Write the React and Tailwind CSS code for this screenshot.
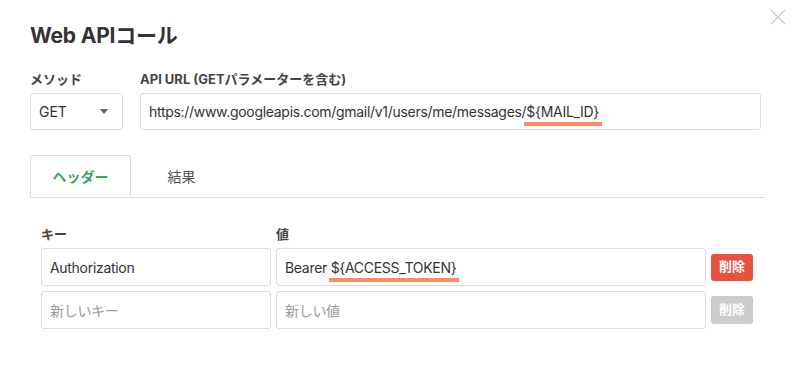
function Marked({ children }) {
  return (
    <span className="relative">
      {children}
      <span className="absolute left-[-2px] right-[-3px] bottom-[-6px] h-[4px] bg-[#ff8a65]" />
    </span>
  );
}

function TextBox({ className = '', children, placeholder }) {
  return (
    <div
      className={`h-[38px] flex items-center px-[8px] border border-[#dcdcdc] rounded-[3px] text-[14px] tracking-[-0.3px] ${
        placeholder ? 'text-[#9a9a9a]' : 'text-[#333]'
      } ${className}`}
    >
      {children}
    </div>
  );
}

export default function App() {
  return (
    <div
      className="relative w-[793px] h-[368px] bg-white text-[#333] pl-[30px] pt-[22px]"
      style={{ fontFamily: 'Inter, "Noto Sans CJK JP", sans-serif' }}
    >
      {/* close */}
      <svg className="absolute left-[770px] top-[9px]" width="16" height="16" viewBox="0 0 16 16">
        <path d="M1 1L15 15M15 1L1 15" stroke="#c8c8c8" strokeWidth="1.3" fill="none" />
      </svg>

      <h1 className="text-[21px] font-bold leading-[28px] tracking-[-0.2px]">Web APIコール</h1>

      <div className="flex gap-[17px] mt-[20px]">
        <div className="w-[93px]">
          <div className="text-[13px] font-bold leading-[18px] mb-[5px] text-[#444]">メソッド</div>
          <div className="h-[37px] flex items-center justify-between pl-[8px] pr-[14px] border border-[#dcdcdc] rounded-[3px] text-[14px]">
            <span>GET</span>
            <svg width="8" height="5" viewBox="0 0 8 5">
              <path d="M0 0H8L4 5Z" fill="#666" />
            </svg>
          </div>
        </div>
        <div className="w-[621px]">
          <div className="text-[13px] font-bold leading-[18px] mb-[5px] text-[#444]">
            API URL (GETパラメーターを含む)
          </div>
          <div className="h-[37px] flex items-center px-[8px] border border-[#dcdcdc] rounded-[3px] text-[14px] tracking-[-0.3px]">
            <span>
              https://www.googleapis.com/gmail/v1/users/me/messages/<Marked>{'${MAIL_ID}'}</Marked>
            </span>
          </div>
        </div>
      </div>

      {/* tabs */}
      <div className="flex mt-[25px] border-b border-[#dcdcdc] w-[735px]">
        <div className="w-[101px] h-[42px] mb-[-1px] flex items-center justify-center border border-[#dcdcdc] border-b-white rounded-t-[3px] bg-white text-[14px] font-bold text-[#37a556]">
          ヘッダー
        </div>
        <div className="w-[101px] h-[42px] flex items-center justify-center text-[14px] text-[#555]">
          結果
        </div>
      </div>

      {/* headers table */}
      <div className="ml-[11px] mt-[27px] w-[712px]">
        <div className="flex gap-[5px] text-[13px] font-bold leading-[18px] text-[#444] mb-[5px]">
          <div className="w-[230px]">キー</div>
          <div>値</div>
        </div>
        <div className="flex flex-col gap-[5px]">
          <div className="flex items-center gap-[5px]">
            <TextBox className="w-[230px]">Authorization</TextBox>
            <TextBox className="w-[430px]">
              <span>
                Bearer <Marked>{'${ACCESS_TOKEN}'}</Marked>
              </span>
            </TextBox>
            <button className="w-[42px] h-[27px] rounded-[3px] bg-[#e5533f] text-white text-[13px] font-bold">
              削除
            </button>
          </div>
          <div className="flex items-center gap-[5px]">
            <TextBox className="w-[230px]" placeholder>
              新しいキー
            </TextBox>
            <TextBox className="w-[430px]" placeholder>
              新しい値
            </TextBox>
            <button className="w-[42px] h-[28px] rounded-[3px] bg-[#cccccc] text-white text-[13px] font-bold">
              削除
            </button>
          </div>
        </div>
      </div>
    </div>
  );
}
